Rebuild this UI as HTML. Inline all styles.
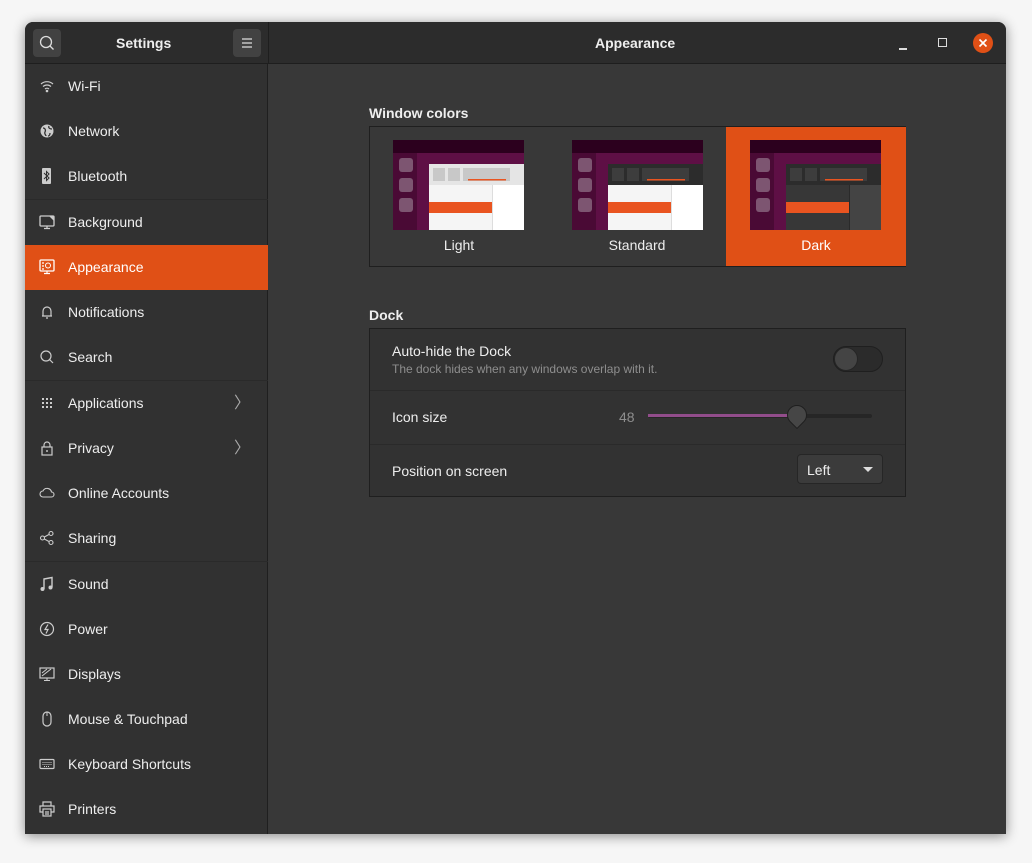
<!DOCTYPE html>
<html><head><style>
*{box-sizing:border-box;margin:0;padding:0}
body{width:1032px;height:863px;background:#f6f6f6;font-family:"Liberation Sans",sans-serif;position:relative;overflow:hidden;color:#eee;font-size:14px}
.win{position:absolute;left:25px;top:22px;width:981px;height:812px;background:#383838;border-radius:8px 8px 0 0;overflow:hidden;box-shadow:0 2px 12px rgba(0,0,0,.45)}
.hdr{position:absolute;left:0;top:0;width:981px;height:42px;background:#2c2c2c;border-bottom:1px solid #1e1e1e}
.side{position:absolute;left:0;top:42px;width:243px;height:770px;background:#313131;border-right:1px solid #1f1f1f}
.row{position:absolute;left:0;width:243px;height:45px;line-height:45px;padding-left:43px;color:#eee;font-size:14px}
.row svg{position:absolute;left:14px;top:14px}
.sel{background:#e05016;color:#fff}
.sep{position:absolute;left:0;width:243px;height:1px;background:#2a2a2a}
.chev{position:absolute;right:18px;top:0;color:#aaa;font-size:16px}
.btn{position:absolute;top:7px;width:28px;height:28px;background:#424242;border-radius:4px}
.t{position:absolute;font-weight:bold;font-size:14px;color:#eee}
</style></head><body>
<div class="win">
 <div class="hdr">
  <div class="btn" style="left:8px"><svg width="28" height="28"><circle cx="13" cy="13" r="5.5" fill="none" stroke="#ddd" stroke-width="1.3"/><line x1="17" y1="17" x2="20.5" y2="20.5" stroke="#ddd" stroke-width="1.3"/></svg></div>
  <div class="t" style="left:91px;top:13px">Settings</div>
  <div class="btn" style="left:208px"><svg width="28" height="28"><path d="M9 10h10M9 14h10M9 18h10" stroke="#ddd" stroke-width="1.2"/></svg></div>
  <div style="position:absolute;left:243px;top:0;width:1px;height:42px;background:#1e1e1e"></div>
  <div class="t" style="left:570px;top:13px">Appearance</div>
  <div style="position:absolute;left:874px;top:26px;width:8px;height:1.5px;background:#ddd"></div>
  <div style="position:absolute;left:913px;top:16px;width:9px;height:9px;border:1.3px solid #ddd"></div>
  <div style="position:absolute;left:948px;top:11px;width:20px;height:20px;border-radius:50%;background:#e05016"><svg width="20" height="20"><path d="M6.5 6.5l7 7M13.5 6.5l-7 7" stroke="#fff" stroke-width="1.6"/></svg></div>
 </div>
 <div class="side">
  <div class="row" style="top:0"><svg width="16" height="16"><path d="M2 6a9 9 0 0 1 12 0M4 8.5a6 6 0 0 1 8 0M6 11a3 3 0 0 1 4 0" fill="none" stroke="#ccc" stroke-width="1.2"/><circle cx="8" cy="13" r="1.3" fill="#ccc"/></svg>Wi-Fi</div>
  <div class="row" style="top:45px"><svg width="16" height="16"><circle cx="8" cy="8" r="6.5" fill="#ccc"/><path d="M4 5c2 0 3 2 2 4s1 3 1 4M10 3c-1 2 1 3 3 3M11 10c0 2-1 3-2 3" fill="none" stroke="#313131" stroke-width="1.3"/></svg>Network</div>
  <div class="row" style="top:90px"><svg width="16" height="16"><rect x="3" y="0" width="9" height="16" rx="1" fill="#ccc"/><path d="M5 5l5 5-2.5 2.5V3.5L10 6 5 11" fill="none" stroke="#313131" stroke-width="1"/></svg>Bluetooth</div>
  <div class="sep" style="top:135px"></div>
  <div class="row" style="top:136px"><svg width="16" height="16"><rect x="1" y="2" width="14" height="10" rx="1" fill="none" stroke="#ccc" stroke-width="1.3"/><path d="M10 2h5v5z" fill="#ccc"/><path d="M8 12v2M5 14.5h6" stroke="#ccc" stroke-width="1.3"/></svg>Background</div>
  <div class="row sel" style="top:181px"><svg width="16" height="16"><rect x="1" y="1" width="14" height="11" rx="1" fill="none" stroke="#fff" stroke-width="1.3"/><circle cx="9" cy="6.5" r="2.5" fill="none" stroke="#fff"/><path d="M3 4h2M3 7h2M3 10h2M8 12v2M5 14.5h6" stroke="#fff" stroke-width="1.2"/></svg>Appearance</div>
  <div class="row" style="top:226px"><svg width="16" height="16"><path d="M4 12V7a4 4 0 0 1 8 0v5zM3 12h10M7 14h2" fill="none" stroke="#ccc" stroke-width="1.2"/></svg>Notifications</div>
  <div class="row" style="top:271px"><svg width="16" height="16"><circle cx="7" cy="7" r="5" fill="none" stroke="#ccc" stroke-width="1.2"/><line x1="10.5" y1="10.5" x2="14" y2="14" stroke="#ccc" stroke-width="1.2"/></svg>Search</div>
  <div class="sep" style="top:316px"></div>
  <div class="row" style="top:317px"><svg width="16" height="16" fill="#ccc"><rect x="3" y="3" width="2" height="2"/><rect x="7" y="3" width="2" height="2"/><rect x="11" y="3" width="2" height="2"/><rect x="3" y="7" width="2" height="2"/><rect x="7" y="7" width="2" height="2"/><rect x="11" y="7" width="2" height="2"/><rect x="3" y="11" width="2" height="2"/><rect x="7" y="11" width="2" height="2"/><rect x="11" y="11" width="2" height="2"/></svg>Applications<span class="chev">〉</span></div>
  <div class="row" style="top:362px"><svg width="16" height="16"><rect x="3" y="7" width="10" height="8" fill="none" stroke="#ccc" stroke-width="1.2"/><path d="M5 7V5a3 3 0 0 1 6 0v2" fill="none" stroke="#ccc" stroke-width="1.2"/><rect x="7.3" y="10" width="1.4" height="2" fill="#ccc"/></svg>Privacy<span class="chev">〉</span></div>
  <div class="row" style="top:407px"><svg width="16" height="16"><path d="M4 12a3 3 0 0 1 0-6 4.5 4.5 0 0 1 8.5 1A2.5 2.5 0 0 1 12.5 12z" fill="none" stroke="#ccc" stroke-width="1.1"/></svg>Online Accounts</div>
  <div class="row" style="top:452px"><svg width="16" height="16" fill="none" stroke="#ccc" stroke-width="1.1"><circle cx="3.5" cy="8" r="2"/><circle cx="12" cy="3.5" r="2"/><circle cx="12" cy="12.5" r="2"/><path d="M5.3 7l4.9-2.6M5.3 9l4.9 2.6"/></svg>Sharing</div>
  <div class="sep" style="top:497px"></div>
  <div class="row" style="top:498px"><svg width="16" height="16"><path d="M5 13V3l8-1.5v10" fill="none" stroke="#ccc" stroke-width="1.4"/><circle cx="3.5" cy="13" r="2" fill="#ccc"/><circle cx="11.5" cy="11.5" r="2" fill="#ccc"/></svg>Sound</div>
  <div class="row" style="top:543px"><svg width="16" height="16"><circle cx="8" cy="8" r="6.5" fill="none" stroke="#ccc" stroke-width="1.2"/><path d="M9 3.5L6 8.5h3l-2 4" fill="none" stroke="#ccc" stroke-width="1.2"/></svg>Power</div>
  <div class="row" style="top:588px"><svg width="16" height="16"><rect x="1" y="2" width="14" height="10" fill="none" stroke="#ccc" stroke-width="1.2"/><path d="M3 10l9-7M3 7l5-4M8 12v2M5 14.5h6" stroke="#ccc" stroke-width="1.1"/></svg>Displays</div>
  <div class="row" style="top:633px"><svg width="16" height="16"><rect x="4" y="1" width="8" height="14" rx="4" fill="none" stroke="#ccc" stroke-width="1.2"/><line x1="8" y1="1" x2="8" y2="5" stroke="#ccc"/></svg>Mouse &amp; Touchpad</div>
  <div class="row" style="top:678px"><svg width="16" height="16"><rect x="1" y="3.5" width="14" height="9" rx="1" fill="none" stroke="#ccc" stroke-width="1.2"/><path d="M3.5 6.5h9M3.5 8.5h9M5 10.5h6" stroke="#ccc" stroke-width="1" stroke-dasharray="1 1"/></svg>Keyboard Shortcuts</div>
  <div class="row" style="top:723px"><svg width="16" height="16" fill="none" stroke="#ccc" stroke-width="1.2"><path d="M4 5V1h8v4M4 11H1V5h14v6h-3"/><rect x="4" y="8" width="8" height="7"/><path d="M6 11h4M6 13h4"/></svg>Printers</div>
 </div>
 <div class="t" style="left:344px;top:83px">Window colors</div>
 <div style="position:absolute;left:344px;top:104px;width:537px;height:141px;border:1px solid #1f1f1f;background:#383838">
  <div style="position:absolute;left:356px;top:0;width:180px;height:139px;background:#e05016"></div>
  <svg style="position:absolute;left:23px;top:13px" width="131" height="90"><rect width="131" height="90" fill="#2c001e"/><rect x="24" y="13" width="107" height="77" fill="#5e0f45"/><rect x="0" y="13" width="24" height="77" fill="#4a0a35"/><rect x="6" y="18" width="14" height="14" rx="3" fill="#7d5571"/><rect x="6" y="38" width="14" height="14" rx="3" fill="#7d5571"/><rect x="6" y="58" width="14" height="14" rx="3" fill="#7d5571"/><rect x="36" y="24" width="95" height="66" fill="#f5f5f5"/><rect x="36" y="24" width="95" height="21" fill="#e5e5e5"/><rect x="40" y="28" width="12" height="13" fill="#c8c8c8"/><rect x="55" y="28" width="12" height="13" fill="#c8c8c8"/><rect x="70" y="28" width="47" height="13" fill="#c8c8c8"/><rect x="75" y="39" width="38" height="1.5" fill="#e95420"/><rect x="100" y="45" width="31" height="45" fill="#fff"/><rect x="99" y="45" width="1" height="45" fill="#ddd"/><rect x="36" y="62" width="63" height="11" fill="#e95420"/></svg>
  <svg style="position:absolute;left:202px;top:13px" width="131" height="90"><rect width="131" height="90" fill="#2c001e"/><rect x="24" y="13" width="107" height="77" fill="#5e0f45"/><rect x="0" y="13" width="24" height="77" fill="#4a0a35"/><rect x="6" y="18" width="14" height="14" rx="3" fill="#7d5571"/><rect x="6" y="38" width="14" height="14" rx="3" fill="#7d5571"/><rect x="6" y="58" width="14" height="14" rx="3" fill="#7d5571"/><rect x="36" y="24" width="95" height="66" fill="#f5f5f5"/><rect x="36" y="24" width="95" height="21" fill="#2c2c2c"/><rect x="40" y="28" width="12" height="13" fill="#3d3d3d"/><rect x="55" y="28" width="12" height="13" fill="#3d3d3d"/><rect x="70" y="28" width="47" height="13" fill="#3d3d3d"/><rect x="75" y="39" width="38" height="1.5" fill="#e95420"/><rect x="100" y="45" width="31" height="45" fill="#fff"/><rect x="99" y="45" width="1" height="45" fill="#ddd"/><rect x="36" y="62" width="63" height="11" fill="#e95420"/></svg>
  <svg style="position:absolute;left:380px;top:13px" width="131" height="90"><rect width="131" height="90" fill="#2c001e"/><rect x="24" y="13" width="107" height="77" fill="#5e0f45"/><rect x="0" y="13" width="24" height="77" fill="#4a0a35"/><rect x="6" y="18" width="14" height="14" rx="3" fill="#7d5571"/><rect x="6" y="38" width="14" height="14" rx="3" fill="#7d5571"/><rect x="6" y="58" width="14" height="14" rx="3" fill="#7d5571"/><rect x="36" y="24" width="95" height="66" fill="#373737"/><rect x="36" y="24" width="95" height="21" fill="#2c2c2c"/><rect x="40" y="28" width="12" height="13" fill="#3d3d3d"/><rect x="55" y="28" width="12" height="13" fill="#3d3d3d"/><rect x="70" y="28" width="47" height="13" fill="#3d3d3d"/><rect x="75" y="39" width="38" height="1.5" fill="#e95420"/><rect x="100" y="45" width="31" height="45" fill="#444"/><rect x="99" y="45" width="1" height="45" fill="#2a2a2a"/><rect x="36" y="62" width="63" height="11" fill="#e95420"/></svg>
  <div style="position:absolute;left:0;width:178px;top:110px;text-align:center">Light</div>
  <div style="position:absolute;left:178px;width:178px;top:110px;text-align:center">Standard</div>
  <div style="position:absolute;left:356px;width:180px;top:110px;text-align:center;color:#fff">Dark</div>
 </div>
 <div class="t" style="left:344px;top:285px">Dock</div>
 <div style="position:absolute;left:344px;top:306px;width:537px;height:169px;border:1px solid #1f1f1f;background:#323232">
  <div style="position:absolute;left:22px;top:14px">Auto-hide the Dock</div>
  <div style="position:absolute;left:22px;top:33px;font-size:12px;color:#8e8e8e">The dock hides when any windows overlap with it.</div>
  <div style="position:absolute;left:463px;top:17px;width:50px;height:26px;border-radius:13px;background:#2b2b2b;border:1px solid #1f1f1f"><div style="position:absolute;left:0;top:0;width:24px;height:24px;border-radius:50%;background:#444;border:1px solid #252525"></div></div>
  <div style="position:absolute;left:0;top:61px;width:535px;height:1px;background:#2a2a2a"></div>
  <div style="position:absolute;left:22px;top:80px">Icon size</div>
  <div style="position:absolute;left:249px;top:80px;color:#8e8e8e">48</div>
  <div style="position:absolute;left:278px;top:85px;width:224px;height:4px;border-radius:2px;background:#262626"></div>
  <div style="position:absolute;left:278px;top:85px;width:148px;height:3px;background:#924d8b"></div>
  <div style="position:absolute;left:417px;top:76px;width:20px;height:20px;border-radius:50% 50% 50% 0;transform:rotate(-45deg);background:#464646;border:1px solid #1f1f1f"></div>
  <div style="position:absolute;left:0;top:115px;width:535px;height:1px;background:#2a2a2a"></div>
  <div style="position:absolute;left:22px;top:134px">Position on screen</div>
  <div style="position:absolute;left:427px;top:125px;width:86px;height:30px;border-radius:4px;background:#3b3b3b;border:1px solid #262626;padding:7px 0 0 9px">Left<span style="position:absolute;right:9px;top:12px;border-left:5px solid transparent;border-right:5px solid transparent;border-top:5px solid #ddd"></span></div>
 </div>
</div>
</body></html>
